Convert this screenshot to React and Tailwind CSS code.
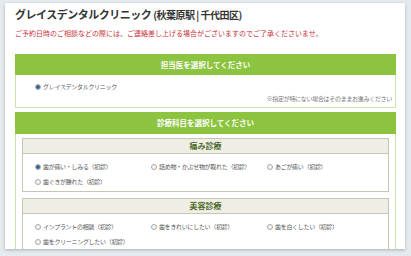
import React from "react";

const F = { fontFamily: '"Noto Sans CJK JP", "Noto Sans", sans-serif' };

function Radio({ checked }) {
  return (
    <span className="inline-flex items-center justify-center w-[6px] h-[6px] rounded-full border border-[#a9a9a9] bg-[#f4f4f4] shrink-0">
      {checked && <span className="w-[4px] h-[4px] rounded-full bg-[#2f5f93]" />}
    </span>
  );
}

function Opt({ label, checked }) {
  return (
    <div className="flex items-center gap-[2px] h-[15px]">
      <Radio checked={checked} />
      <span className="text-[6px] leading-[8px] text-[#555] whitespace-nowrap tracking-[-0.3px]">{label}</span>
    </div>
  );
}

function Section({ title, rows }) {
  return (
    <div className="border border-[#c3c8b2]">
      <div className="h-[15px] bg-[#efede6] border-b border-[#c3c8b2] flex items-center justify-center text-[8px] font-bold text-[#4a6a25]">
        {title}
      </div>
      <div className="pl-[12px] pt-[5px] pb-[2px]">
        {rows.map((r, i) => (
          <div key={i} className="grid grid-cols-[116px_116px_116px]">
            {r.map((o, j) => (
              <Opt key={j} label={o.label} checked={o.checked} />
            ))}
          </div>
        ))}
      </div>
    </div>
  );
}

export default function App() {
  return (
    <div style={F} className="w-[411px] h-[256px] overflow-hidden bg-[#e4eaee] pt-[3px] pl-[5px]">
      <div className="w-[400px] h-[246px] bg-white shadow-[0_1px_3px_rgba(0,0,0,0.25)] pl-[10px] pr-[9px] pt-[4px] overflow-hidden">
        <div className="text-[11px] leading-[14px] font-bold text-[#333] whitespace-nowrap tracking-[-0.5px]">
          グレイスデンタルクリニック <span className="text-[10px]">(秋葉原駅 | 千代田区)</span>
        </div>
        <div className="mt-[6px] text-[7px] leading-[10px] text-[#c9323a] whitespace-nowrap">
          ご予約日時のご相談などの際には、ご連絡差し上げる場合がございますのでご了承くださいませ。
        </div>

        <div className="mt-[16px] h-[21px] bg-[#8cc43f] flex items-center justify-center text-[7.5px] font-bold text-white">
          担当医を選択してください
        </div>
        <div className="h-[33px] border border-t-0 border-[#cde3b0] pl-[19px] pr-[3px] pt-[8px]">
          <div className="flex items-center gap-[2px] h-[8px]">
            <Radio checked />
            <span className="text-[6px] leading-[8px] text-[#555] tracking-[-0.3px]">グレイスデンタルクリニック</span>
          </div>
          <div className="mt-[4px] text-right text-[6px] leading-[8px] text-[#777] tracking-[-0.3px]">
            ※指定が特にない場合はそのままお進みください
          </div>
        </div>

        <div className="mt-[4px] h-[22px] bg-[#8cc43f] flex items-center justify-center text-[7.5px] font-bold text-white">
          診療科目を選択してください
        </div>
        <div className="border-x border-[#cde3b0] px-[6px] pt-[4px] pb-[10px] flex flex-col gap-[6px]">
          <Section
            title="痛み診療"
            rows={[
              [
                { label: "歯が痛い・しみる（初診）", checked: true },
                { label: "詰め物・かぶせ物が取れた（初診）" },
                { label: "あごが痛い（初診）" },
              ],
              [{ label: "歯ぐきが腫れた（初診）" }],
            ]}
          />
          <Section
            title="美容診療"
            rows={[
              [
                { label: "インプラントの相談（初診）" },
                { label: "歯をきれいにしたい（初診）" },
                { label: "歯を白くしたい（初診）" },
              ],
              [{ label: "歯をクリーニングしたい（初診）" }],
            ]}
          />
        </div>
      </div>
    </div>
  );
}
